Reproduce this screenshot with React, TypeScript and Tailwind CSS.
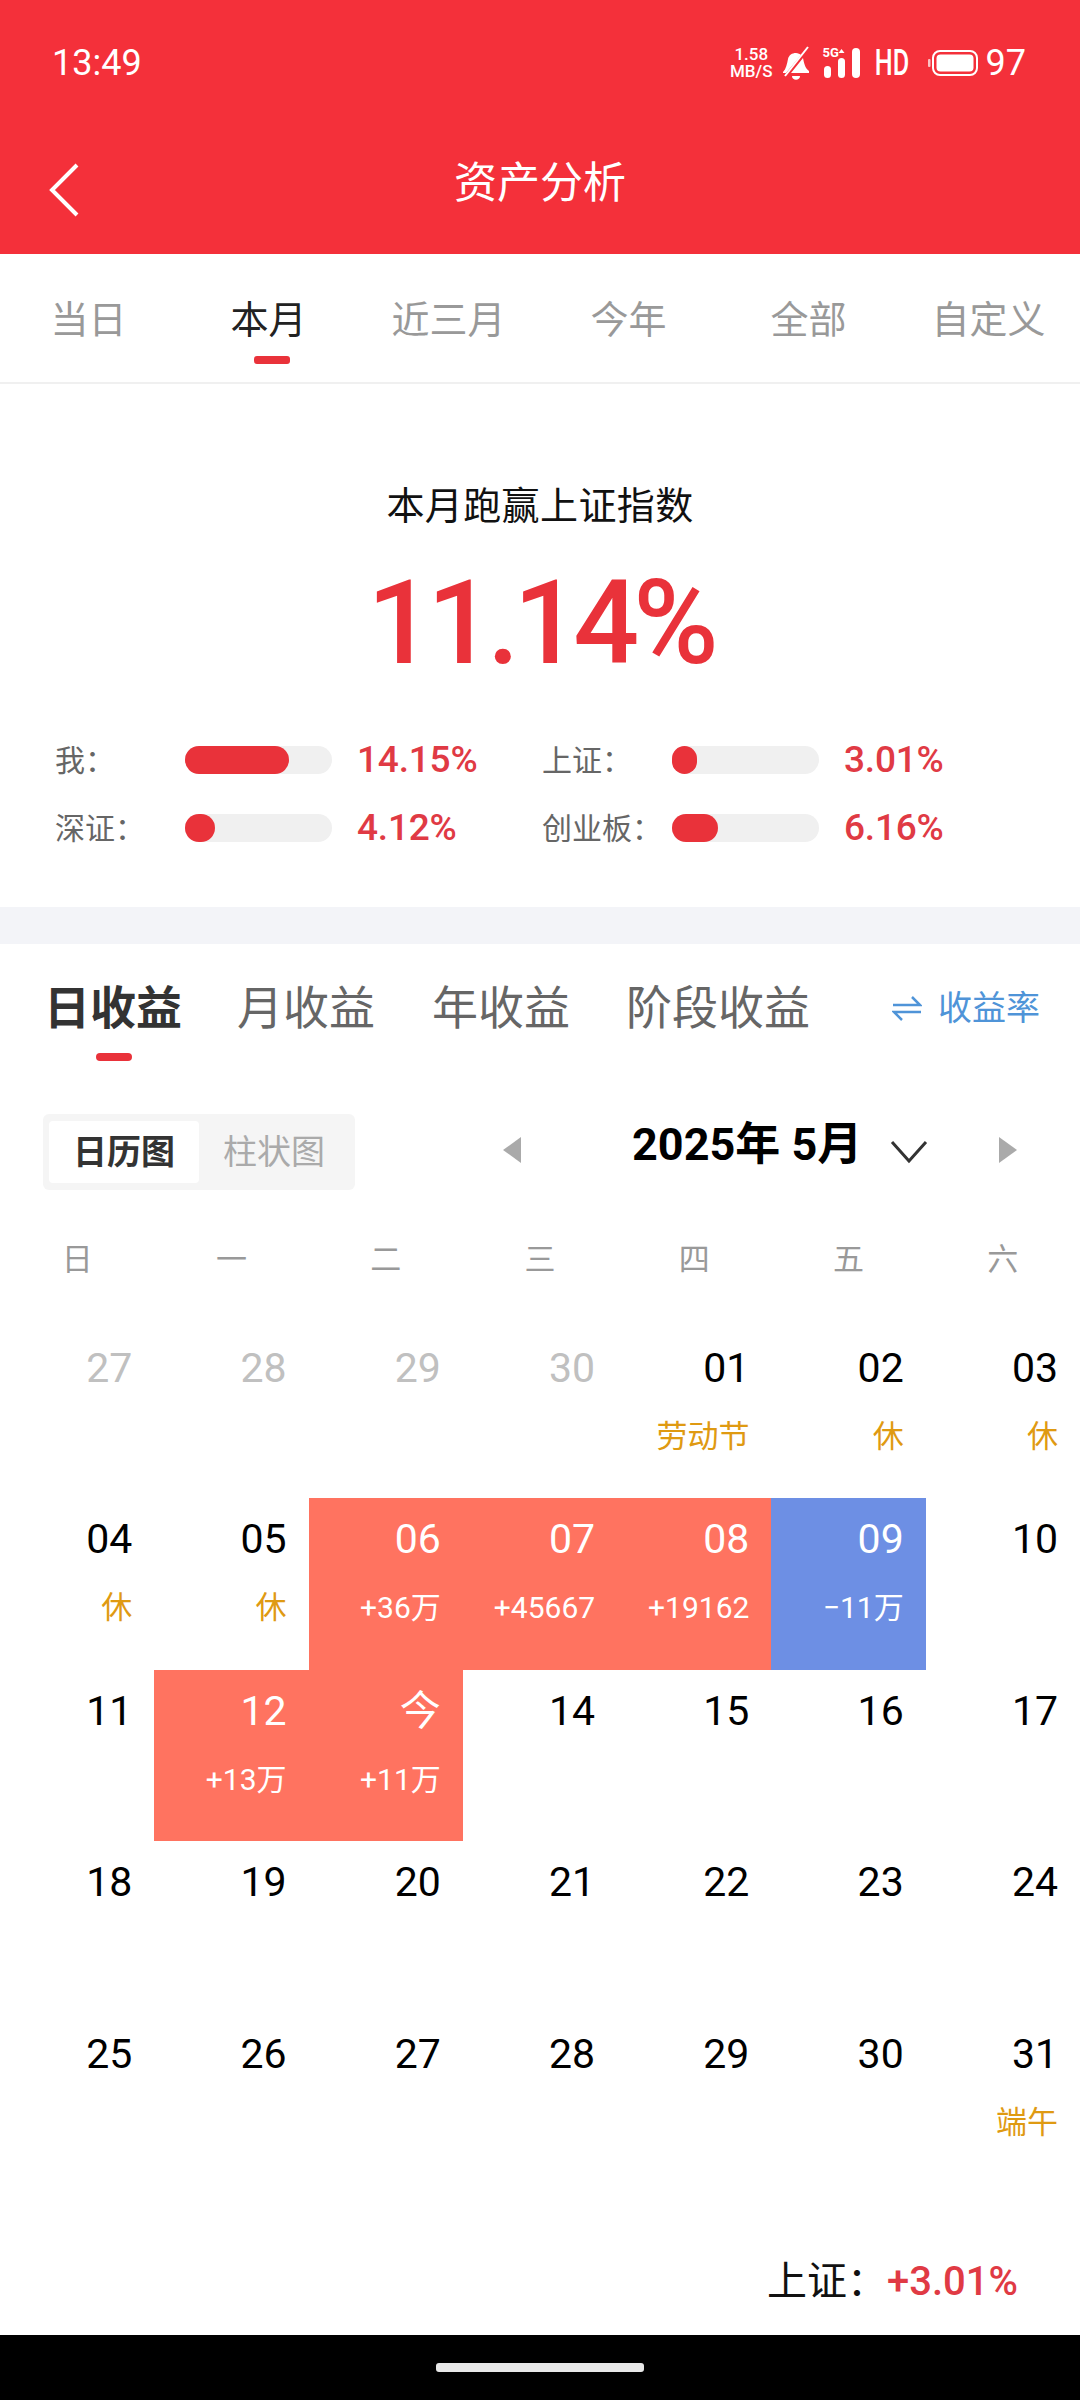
const FONT = "font-['Roboto','Noto_Sans_CJK_SC',sans-serif]";

const periodTabs = ['当日', '本月', '近三月', '今年', '全部', '自定义'];

const compareRows = [
	{ label: '我：', fill: 104, value: '14.15%' },
	{ label: '上证：', fill: 25, value: '3.01%' },
	{ label: '深证：', fill: 30, value: '4.12%' },
	{ label: '创业板：', fill: 46, value: '6.16%' },
];

type Day = { n: string; sub?: string; kind?: 'old' | 'up' | 'down' | 'rest' };

const days: Day[] = [
	{ n: '27', kind: 'old' },
	{ n: '28', kind: 'old' },
	{ n: '29', kind: 'old' },
	{ n: '30', kind: 'old' },
	{ n: '01', sub: '劳动节', kind: 'rest' },
	{ n: '02', sub: '休', kind: 'rest' },
	{ n: '03', sub: '休', kind: 'rest' },
	{ n: '04', sub: '休', kind: 'rest' },
	{ n: '05', sub: '休', kind: 'rest' },
	{ n: '06', sub: '+36万', kind: 'up' },
	{ n: '07', sub: '+45667', kind: 'up' },
	{ n: '08', sub: '+19162', kind: 'up' },
	{ n: '09', sub: '−11万', kind: 'down' },
	{ n: '10' },
	{ n: '11' },
	{ n: '12', sub: '+13万', kind: 'up' },
	{ n: '今', sub: '+11万', kind: 'up' },
	{ n: '14' },
	{ n: '15' },
	{ n: '16' },
	{ n: '17' },
	{ n: '18' },
	{ n: '19' },
	{ n: '20' },
	{ n: '21' },
	{ n: '22' },
	{ n: '23' },
	{ n: '24' },
	{ n: '25' },
	{ n: '26' },
	{ n: '27' },
	{ n: '28' },
	{ n: '29' },
	{ n: '30' },
	{ n: '31', sub: '端午', kind: 'rest' },
];

const StatusBar = () => (
	<div className="h-[126px] flex items-center justify-between pl-[52px] pr-[54px] text-white">
		<span className="text-[36px] leading-none">13:49</span>
		<div className="flex items-center">
			<div className="flex flex-col items-center text-[17px] leading-[17px] font-medium mr-[8px]">
				<span>1.58</span>
				<span>MB/S</span>
			</div>
			<svg width="30" height="36" viewBox="0 0 30 36" className="mr-[12px]">
				<path d="M2 27c3-3 4-8 5-13 1-4 4-6 8-6 2 0 4 1 5 2L5 28H2zM22 13c1 5 2 10 6 13v2H10z" fill="white" />
				<path d="M4 31 27 2" stroke="white" strokeWidth="2" />
				<path d="M11 31h8c0 5-8 5-8 0z" fill="white" />
			</svg>
			<div className="relative w-[40px] h-[32px] mr-[13px]">
				<span className="absolute left-0 top-[-1px] text-[13px] leading-none font-bold">5G</span>
				<svg width="40" height="32" viewBox="0 0 40 32">
					<rect x="1" y="19" width="7" height="12" rx="3.5" fill="white" />
					<rect x="15" y="11" width="7" height="20" rx="3.5" fill="white" />
					<path d="M18.5 2l3 4h-6z" fill="white" />
					<rect x="29" y="1" width="8" height="30" rx="4" fill="white" />
				</svg>
			</div>
			<span className="text-[36px] leading-none font-medium scale-x-[0.7] w-[32px] mr-[20px] flex justify-center">HD</span>
			<svg width="50" height="28" viewBox="0 0 50 28" className="mr-[8px]">
				<rect x="0" y="10" width="2.5" height="8" rx="1" fill="white" opacity="0.7" />
				<rect x="5" y="2" width="44" height="24" rx="7" fill="none" stroke="white" strokeWidth="2" />
				<rect x="8.5" y="5.5" width="37" height="17" rx="4" fill="white" />
			</svg>
			<span className="text-[36px] leading-none">97</span>
		</div>
	</div>
);

const NavBar = () => (
	<div className="h-[112px] mb-[16px] relative flex items-center justify-center text-white">
		<svg width="34" height="56" viewBox="0 0 34 56" className="absolute left-[47px] top-[36px]">
			<path d="M30 3 5 28l25 25" fill="none" stroke="white" strokeWidth="4" />
		</svg>
		<span className="text-[43px] leading-none mt-[2px]">资产分析</span>
	</div>
);

const PeriodTabs = () => (
	<div className="h-[130px] grid grid-cols-6 border-b-2 border-[#f0f0f0]">
		{periodTabs.map((tab, i) => (
			<div key={tab} className="flex flex-col items-center pt-[38px] pr-[3px]">
				<span className={`text-[38px] leading-[56px] ${i === 1 ? 'text-[#222]' : 'text-[#999]'}`}>{tab}</span>
				{i === 1 && <div className="ml-[6px] mt-[8px] w-[36px] h-[8px] rounded-[3px] bg-[#e9323a]" />}
			</div>
		))}
	</div>
);

const Summary = () => (
	<div className="h-[523px] flex flex-col items-center pt-[94px]">
		<div className="text-[38px] leading-[56px] tracking-[0.4px] text-[#111]">本月跑赢上证指数</div>
		<div className="mt-[33px] mb-[-3px] text-[116px] leading-[112px] tracking-[-6px] font-medium text-[#e9323a]">11.14%</div>
		<div className="mt-[50px] w-full pl-[55px] grid grid-cols-[487px_1fr]">
			{compareRows.map((row) => (
				<div key={row.label} className="h-[68px] flex items-center">
					<span className="w-[130px] text-[30px] text-[#666]">{row.label}</span>
					<div className="w-[147px] h-[28px] rounded-full bg-[#f0f0f0]">
						<div className="h-full rounded-full bg-[#e9323a]" style={{ width: row.fill }} />
					</div>
					<span className="ml-[25px] text-[37px] tracking-[-0.2px] font-medium text-[#e03a44]">{row.value}</span>
				</div>
			))}
		</div>
	</div>
);

const ProfitTabs = () => (
	<div className="pt-[32px] pl-[44px] pr-[40px]">
		<div className="flex items-center h-[64px] text-[46px] text-[#666]">
			<span className="font-bold text-[#333]">日收益</span>
			<span className="ml-[55px]">月收益</span>
			<span className="ml-[57px]">年收益</span>
			<span className="ml-[56px]">阶段收益</span>
			<span className="ml-auto flex items-center text-[34px] text-[#4f94d8]">
				<svg width="30" height="28" viewBox="0 0 30 28" className="mr-[16px]">
					<path d="M1 11h27L20 3M29 18H2l8 8" fill="none" stroke="#4f94d8" strokeWidth="2.5" />
				</svg>
				收益率
			</span>
		</div>
		<div className="ml-[52px] mt-[13px] w-[36px] h-[8px] rounded-full bg-[#e9323a]" />
	</div>
);

const MonthRow = () => (
	<div className="mt-[53px] h-[76px] pl-[43px] flex items-center relative">
		<div className="w-[312px] h-[76px] rounded-[6px] bg-[#f5f5f5] p-[6px] pt-[7px] flex">
			<div className="w-[150px] h-[62px] rounded-[4px] bg-white flex items-center justify-center text-[34px] font-bold text-[#333]">
				日历图
			</div>
			<div className="w-[150px] h-[62px] flex items-center justify-center text-[34px] text-[#aaa]">柱状图</div>
		</div>
		<svg width="20" height="28" viewBox="0 0 20 28" className="ml-[147px] mt-[-4px]">
			<path d="M19 1v26L1 14z" fill="#aaa" />
		</svg>
		<span className="ml-[110px] mt-[-16px] text-[45px] leading-none font-bold text-black whitespace-nowrap">2025年 5月</span>
		<svg width="38" height="24" viewBox="0 0 38 24" className="ml-[28px]">
			<path d="M2 2l17 19L36 2" fill="none" stroke="#333" strokeWidth="3" />
		</svg>
		<svg width="20" height="28" viewBox="0 0 20 28" className="ml-[70px] mt-[-4px]">
			<path d="M1 1v26l18-13z" fill="#aaa" />
		</svg>
	</div>
);

const Weekdays = () => (
	<div className="mt-[52px] grid grid-cols-7 h-[36px]">
		{['日', '一', '二', '三', '四', '五', '六'].map((d) => (
			<span key={d} className="text-center text-[31px] leading-[36px] text-[#999]">
				{d}
			</span>
		))}
	</div>
);

const DayCell = ({ day }: { day: Day }) => {
	const bg = day.kind === 'up' ? 'bg-[#ff7360]' : day.kind === 'down' ? 'bg-[#6d8fe4]' : '';
	const filled = day.kind === 'up' || day.kind === 'down';
	const numColor = filled ? 'text-white' : day.kind === 'old' ? 'text-[#c0c0c0]' : 'text-black';
	const subClass = filled ? 'text-white text-[30px]' : 'text-[#df9a12] text-[31px]';
	return (
		<div className={`h-[171.4px] pr-[22px] pt-[17px] flex flex-col items-end ${bg}`}>
			<span className={`text-[41px] leading-[48px] ${numColor}`}>{day.n}</span>
			<span className={`mt-[24px] leading-[42px] whitespace-nowrap ${subClass}`}>{day.sub}</span>
		</div>
	);
};

const Calendar = () => (
	<div className="mt-[49px] grid grid-cols-7">
		{days.map((day, i) => (
			<DayCell key={i} day={day} />
		))}
	</div>
);

const App = () => {
	return (
		<div className={`w-[1080px] h-[2400px] flex flex-col bg-white overflow-hidden ${FONT}`}>
			<div className="bg-[#f4303a]">
				<StatusBar />
				<NavBar />
			</div>
			<PeriodTabs />
			<Summary />
			<div className="h-[37px] bg-[#f3f4f8]" />
			<ProfitTabs />
			<MonthRow />
			<Weekdays />
			<Calendar />
			<div className="flex-1 flex items-center justify-end pr-[62px] pt-[46px]">
				<span className="text-[40px] text-[#111]">上证：</span>
				<span className="text-[40px] font-medium text-[#e03a44]">+3.01%</span>
			</div>
			<div className="h-[65px] bg-black flex items-center justify-center">
				<div className="w-[208px] h-[9px] rounded-[3px] bg-[#e8e8e8]" />
			</div>
		</div>
	);
};

export default App;
